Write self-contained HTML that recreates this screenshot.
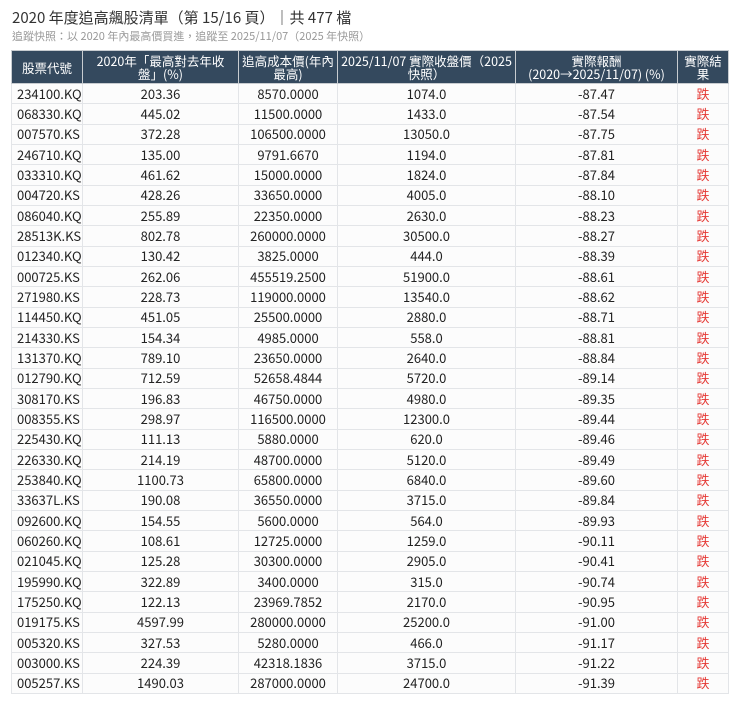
<!DOCTYPE html>
<html><head><meta charset="utf-8"><style>
body{margin:0;background:#fff;font-family:"Noto Sans CJK TC","Liberation Sans",sans-serif;color:#222}
.t{position:absolute;left:12px;top:7px;font-size:15px;line-height:22px;color:#333;white-space:nowrap}
.s{position:absolute;left:12px;top:29px;font-size:11px;line-height:15px;color:#999;white-space:nowrap}
table{position:absolute;left:11px;top:50px;border-collapse:collapse;table-layout:fixed;width:717px}
th{background:#34495e;color:#fff;font-weight:normal;font-size:12.5px;line-height:13px;height:32px;padding:0 3px;border:1px solid #c8ccd0;text-align:center;overflow:hidden}
td{height:19.33px;padding:0 4px;border:1px solid #e3e5e8;font-size:13px;line-height:18px;text-align:center;background:#fcfcfc;white-space:nowrap;overflow:hidden}
td:first-child{text-align:left;padding-left:5px}
td.r{color:#e53935}
</style></head><body>
<div class="t">2020 年度追高飆股清單（第 15/16 頁）｜共 477 檔</div>
<div class="s">追蹤快照：以 2020 年內最高價買進，追蹤至 2025/11/07（2025 年快照）</div>
<table>
<colgroup><col style="width:71px"><col style="width:156px"><col style="width:99px"><col style="width:178px"><col style="width:162px"><col style="width:51px"></colgroup>
<tr><th>股票代號</th><th>2020年「最高對去年收<br>盤」(%)</th><th>追高成本價(年內<br>最高)</th><th>2025/11/07 實際收盤價（2025<br>快照）</th><th>實際報酬<br>(2020→2025/11/07) (%)</th><th>實際結<br>果</th></tr>
<tr><td>234100.KQ</td><td>203.36</td><td>8570.0000</td><td>1074.0</td><td>-87.47</td><td class="r">跌</td></tr>
<tr><td>068330.KQ</td><td>445.02</td><td>11500.0000</td><td>1433.0</td><td>-87.54</td><td class="r">跌</td></tr>
<tr><td>007570.KS</td><td>372.28</td><td>106500.0000</td><td>13050.0</td><td>-87.75</td><td class="r">跌</td></tr>
<tr><td>246710.KQ</td><td>135.00</td><td>9791.6670</td><td>1194.0</td><td>-87.81</td><td class="r">跌</td></tr>
<tr><td>033310.KQ</td><td>461.62</td><td>15000.0000</td><td>1824.0</td><td>-87.84</td><td class="r">跌</td></tr>
<tr><td>004720.KS</td><td>428.26</td><td>33650.0000</td><td>4005.0</td><td>-88.10</td><td class="r">跌</td></tr>
<tr><td>086040.KQ</td><td>255.89</td><td>22350.0000</td><td>2630.0</td><td>-88.23</td><td class="r">跌</td></tr>
<tr><td>28513K.KS</td><td>802.78</td><td>260000.0000</td><td>30500.0</td><td>-88.27</td><td class="r">跌</td></tr>
<tr><td>012340.KQ</td><td>130.42</td><td>3825.0000</td><td>444.0</td><td>-88.39</td><td class="r">跌</td></tr>
<tr><td>000725.KS</td><td>262.06</td><td>455519.2500</td><td>51900.0</td><td>-88.61</td><td class="r">跌</td></tr>
<tr><td>271980.KS</td><td>228.73</td><td>119000.0000</td><td>13540.0</td><td>-88.62</td><td class="r">跌</td></tr>
<tr><td>114450.KQ</td><td>451.05</td><td>25500.0000</td><td>2880.0</td><td>-88.71</td><td class="r">跌</td></tr>
<tr><td>214330.KS</td><td>154.34</td><td>4985.0000</td><td>558.0</td><td>-88.81</td><td class="r">跌</td></tr>
<tr><td>131370.KQ</td><td>789.10</td><td>23650.0000</td><td>2640.0</td><td>-88.84</td><td class="r">跌</td></tr>
<tr><td>012790.KQ</td><td>712.59</td><td>52658.4844</td><td>5720.0</td><td>-89.14</td><td class="r">跌</td></tr>
<tr><td>308170.KS</td><td>196.83</td><td>46750.0000</td><td>4980.0</td><td>-89.35</td><td class="r">跌</td></tr>
<tr><td>008355.KS</td><td>298.97</td><td>116500.0000</td><td>12300.0</td><td>-89.44</td><td class="r">跌</td></tr>
<tr><td>225430.KQ</td><td>111.13</td><td>5880.0000</td><td>620.0</td><td>-89.46</td><td class="r">跌</td></tr>
<tr><td>226330.KQ</td><td>214.19</td><td>48700.0000</td><td>5120.0</td><td>-89.49</td><td class="r">跌</td></tr>
<tr><td>253840.KQ</td><td>1100.73</td><td>65800.0000</td><td>6840.0</td><td>-89.60</td><td class="r">跌</td></tr>
<tr><td>33637L.KS</td><td>190.08</td><td>36550.0000</td><td>3715.0</td><td>-89.84</td><td class="r">跌</td></tr>
<tr><td>092600.KQ</td><td>154.55</td><td>5600.0000</td><td>564.0</td><td>-89.93</td><td class="r">跌</td></tr>
<tr><td>060260.KQ</td><td>108.61</td><td>12725.0000</td><td>1259.0</td><td>-90.11</td><td class="r">跌</td></tr>
<tr><td>021045.KQ</td><td>125.28</td><td>30300.0000</td><td>2905.0</td><td>-90.41</td><td class="r">跌</td></tr>
<tr><td>195990.KQ</td><td>322.89</td><td>3400.0000</td><td>315.0</td><td>-90.74</td><td class="r">跌</td></tr>
<tr><td>175250.KQ</td><td>122.13</td><td>23969.7852</td><td>2170.0</td><td>-90.95</td><td class="r">跌</td></tr>
<tr><td>019175.KS</td><td>4597.99</td><td>280000.0000</td><td>25200.0</td><td>-91.00</td><td class="r">跌</td></tr>
<tr><td>005320.KS</td><td>327.53</td><td>5280.0000</td><td>466.0</td><td>-91.17</td><td class="r">跌</td></tr>
<tr><td>003000.KS</td><td>224.39</td><td>42318.1836</td><td>3715.0</td><td>-91.22</td><td class="r">跌</td></tr>
<tr><td>005257.KS</td><td>1490.03</td><td>287000.0000</td><td>24700.0</td><td>-91.39</td><td class="r">跌</td></tr>
</table>
</body></html>
